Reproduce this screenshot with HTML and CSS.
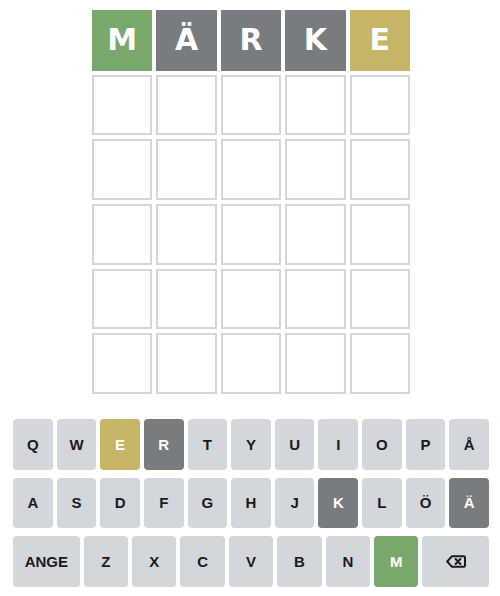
FILE: index.html
```html
<!DOCTYPE html>
<html lang="sv">
<head>
<meta charset="utf-8">
<title>Ordel</title>
<link rel="stylesheet" href="styles.css">
</head>
<body>
<div class="app">
  <div class="board">
    <div class="row">
      <div class="tile correct">M</div>
      <div class="tile absent">Ä</div>
      <div class="tile absent">R</div>
      <div class="tile absent">K</div>
      <div class="tile present">E</div>
    </div>
    <div class="row"><div class="tile"></div><div class="tile"></div><div class="tile"></div><div class="tile"></div><div class="tile"></div></div>
    <div class="row"><div class="tile"></div><div class="tile"></div><div class="tile"></div><div class="tile"></div><div class="tile"></div></div>
    <div class="row"><div class="tile"></div><div class="tile"></div><div class="tile"></div><div class="tile"></div><div class="tile"></div></div>
    <div class="row"><div class="tile"></div><div class="tile"></div><div class="tile"></div><div class="tile"></div><div class="tile"></div></div>
    <div class="row"><div class="tile"></div><div class="tile"></div><div class="tile"></div><div class="tile"></div><div class="tile"></div></div>
  </div>
  <div class="keyboard">
    <div class="kb-row">
      <button class="key">Q</button>
      <button class="key">W</button>
      <button class="key present">E</button>
      <button class="key absent">R</button>
      <button class="key">T</button>
      <button class="key">Y</button>
      <button class="key">U</button>
      <button class="key">I</button>
      <button class="key">O</button>
      <button class="key">P</button>
      <button class="key">Å</button>
    </div>
    <div class="kb-row">
      <button class="key">A</button>
      <button class="key">S</button>
      <button class="key">D</button>
      <button class="key">F</button>
      <button class="key">G</button>
      <button class="key">H</button>
      <button class="key">J</button>
      <button class="key absent">K</button>
      <button class="key">L</button>
      <button class="key">Ö</button>
      <button class="key absent">Ä</button>
    </div>
    <div class="kb-row">
      <button class="key wide">ANGE</button>
      <button class="key">Z</button>
      <button class="key">X</button>
      <button class="key">C</button>
      <button class="key">V</button>
      <button class="key">B</button>
      <button class="key">N</button>
      <button class="key correct">M</button>
      <button class="key wide" aria-label="backspace">
        <svg class="bs-icon" width="20" height="13" viewBox="0 0 20 13" aria-hidden="true">
          <path d="M6 1.2 H17.8 a1.2 1.2 0 0 1 1.2 1.2 V10.6 a1.2 1.2 0 0 1 -1.2 1.2 H6 L1.2 6.5 Z" fill="none" stroke="#1a1a1b" stroke-width="2" stroke-linejoin="round"/>
          <path d="M9.6 4 L14.4 9 M14.4 4 L9.6 9" fill="none" stroke="#1a1a1b" stroke-width="2" stroke-linecap="round"/>
        </svg>
      </button>
    </div>
  </div>
</div>
</body>
</html>
```
FILE: styles.css
```css
* {
  box-sizing: border-box;
}

html, body {
  margin: 0;
  padding: 0;
  background: #ffffff;
}

body {
  font-family: "DejaVu Sans", "Liberation Sans", sans-serif;
  color: #1a1a1b;
}

.app {
  padding: 10px 0 0 2px;
  display: flex;
  flex-direction: column;
  align-items: center;
}

.board {
  width: 318px;
  height: 384px;
  display: grid;
  grid-template-rows: repeat(6, 1fr);
  gap: 4px;
}

.row {
  display: grid;
  grid-template-columns: repeat(5, 1fr);
  gap: 4px;
}

.tile {
  border: 2px solid #d3d6da;
  display: flex;
  align-items: center;
  justify-content: center;
  font-size: 30px;
  font-weight: bold;
  color: #ffffff;
  line-height: 1;
}

.tile.correct {
  background: #79a86b;
  border-color: #79a86b;
}

.tile.present {
  background: #c6b566;
  border-color: #c6b566;
}

.tile.absent {
  background: #787c7e;
  border-color: #787c7e;
}

.keyboard {
  width: 476px;
  margin-top: 25px;
  display: flex;
  flex-direction: column;
  gap: 8px;
}

.kb-row {
  display: flex;
  gap: 4px;
}

.key {
  flex: 1 1 0;
  min-width: 0;
  height: 50.6px;
  padding: 0;
  border: none;
  border-radius: 4px;
  background: #d3d6da;
  color: #1a1a1b;
  font-family: "Liberation Sans", "DejaVu Sans", sans-serif;
  font-size: 15px;
  font-weight: bold;
  display: flex;
  align-items: center;
  justify-content: center;
}

.key.wide {
  flex: 1.5 1 0;
}

.key.correct {
  background: #79a86b;
  color: #ffffff;
}

.key.present {
  background: #c6b566;
  color: #ffffff;
}

.key.absent {
  background: #787c7e;
  color: #ffffff;
}

.bs-icon {
  display: block;
}
```
